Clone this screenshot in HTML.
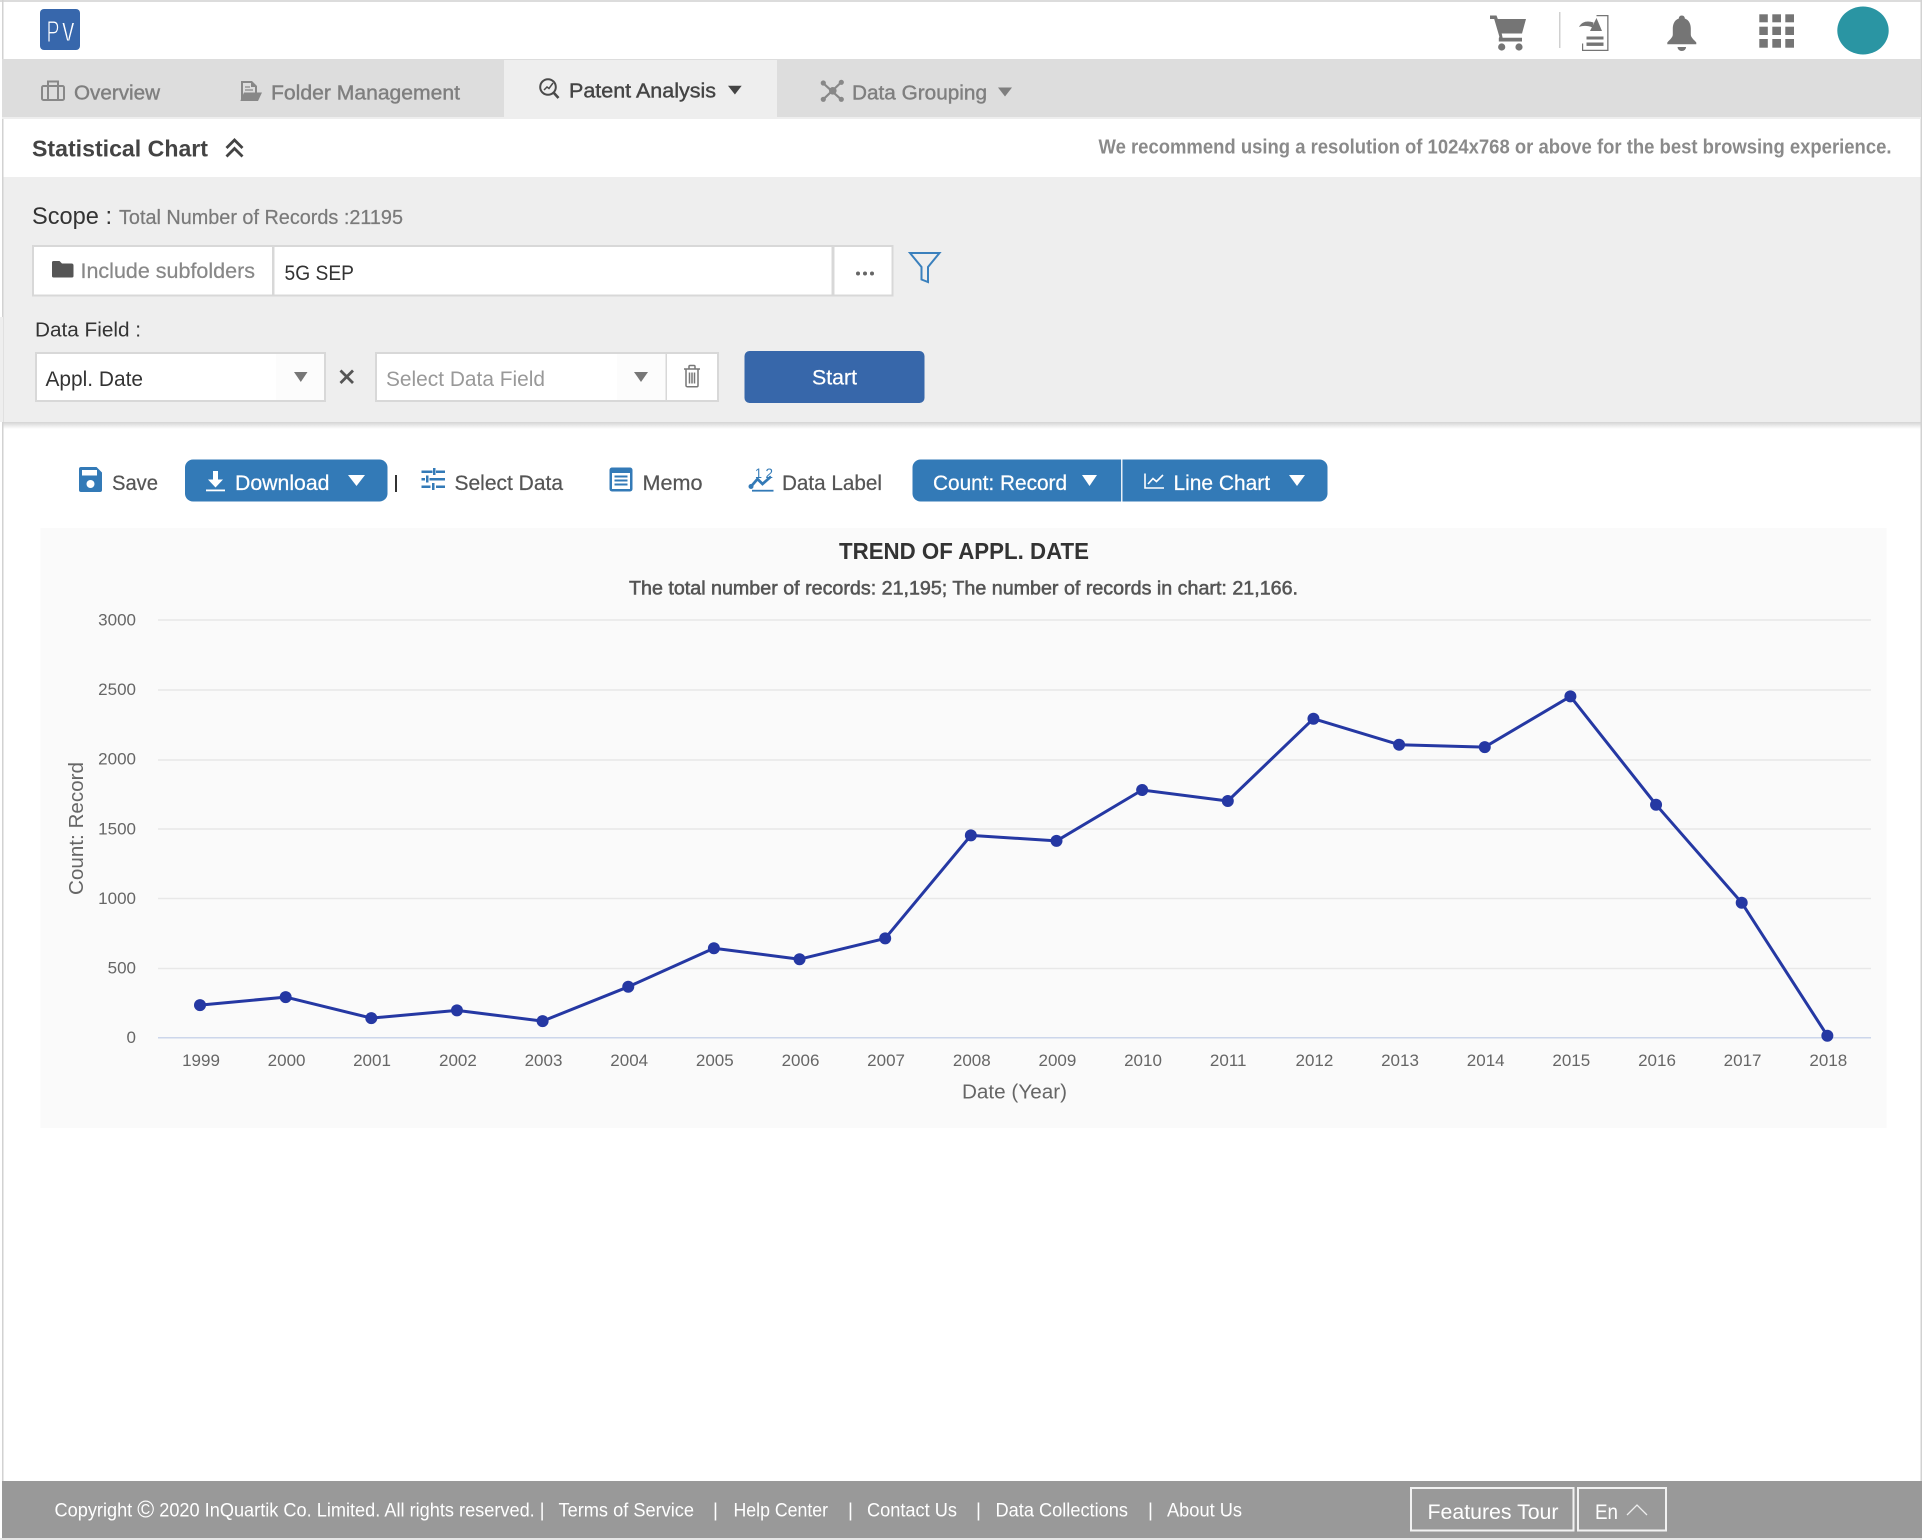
<!DOCTYPE html>
<html lang="en">
<head>
<meta charset="utf-8">
<title>Statistical Chart</title>
<style>
html,body{margin:0;padding:0;background:#fff;width:1922px;height:1540px;overflow:hidden}
svg{display:block}
text{font-family:"Liberation Sans",Arial,sans-serif;white-space:pre}
.m{stroke-width:.4px}
.l{stroke-width:.22px}
</style>
</head>
<body>
<svg xmlns="http://www.w3.org/2000/svg" width="1922" height="1540" viewBox="0 0 1922 1540">
<defs>
<linearGradient id="sh" x1="0" y1="0" x2="0" y2="1"><stop offset="0" stop-color="#d4d4d4"/><stop offset="1" stop-color="#ffffff"/></linearGradient>
</defs>
<rect width="1922" height="1540" fill="#fff"/>
<!-- top -->
<rect x="0" y="0" width="1922" height="2" fill="#dcdcdc"/>
<rect x="2" y="0" width="1.5" height="1481" fill="#d2d2d2"/>
<rect x="1920.5" y="0" width="1.5" height="1481" fill="#d2d2d2"/>

<!-- logo -->
<rect x="40" y="9" width="40" height="41" rx="4" fill="#3767ac"/>
<text x="46.500" y="42" font-size="31" fill="#fff" stroke="#3767ac" stroke-width=".9" textLength="13" lengthAdjust="spacingAndGlyphs">P</text>
<text x="62" y="41" font-size="35" fill="#fff" stroke="#3767ac" stroke-width=".9" textLength="12.500" lengthAdjust="spacingAndGlyphs">v</text>

<!-- header icons -->
<g fill="#757575">
<path d="M1490 15.500h6.500l1.300 3.500H1526l-4 14.500h-20.300l.9 4.200H1522v3.800h-23.200v-3.200l.6-1.600L1494.200 19H1490z"/>
<circle cx="1501.700" cy="47" r="3.600"/><circle cx="1519" cy="47" r="3.600"/>
<rect x="1559" y="12" width="1.500" height="36" fill="#d0d0d0"/>
<path d="M1596.500 18l5.500 13h-12z"/>
<path d="M1579 27C1582 21 1588 20.500 1593.500 22.500L1592.500 27.500C1588 25.500 1583 25.500 1579 27z"/>
<rect x="1586.500" y="36.500" width="17" height="3"/><rect x="1586.500" y="42.500" width="17" height="3.400"/>
<path d="M1596.500 15h12v36h-26.500v-7.500h1.200v6.300h24V16.200h-10.700z"/>
<path d="M1681.800 15.500c2 0 3 1.500 3 3 4.500 1.500 6 6 6 10v6c0 3 3 5 5.500 8v1.800h-29v-1.800c2.500-3 5.500-5 5.500-8v-6c0-4 1.500-8.500 6-10 0-1.500 1-3 3-3z"/>
<path d="M1677.500 47h8.600a4.300 4 0 0 1-8.600 0z"/>
<rect x="1759.300" y="14.300" width="8.500" height="8"/><rect x="1772.300" y="14.300" width="8.700" height="8"/><rect x="1785.300" y="14.300" width="8.700" height="8"/>
<rect x="1759.300" y="26.700" width="8.500" height="8.300"/><rect x="1772.300" y="26.700" width="8.700" height="8.300"/><rect x="1785.300" y="26.700" width="8.700" height="8.300"/>
<rect x="1759.300" y="39" width="8.500" height="8.700"/><rect x="1772.300" y="39" width="8.700" height="8.700"/><rect x="1785.300" y="39" width="8.700" height="8.700"/>
</g>
<ellipse cx="1863" cy="30.500" rx="25.700" ry="24" fill="#2a95a3"/>

<!-- tab bar -->
<rect x="2" y="59" width="1919" height="58" fill="#dddddd"/>
<rect x="2" y="117" width="1919" height="2" fill="#eeeeee"/>
<rect x="504" y="60" width="273" height="58" fill="#eeeeee"/>

<g fill="none" stroke="#888" stroke-width="2">
<rect x="42" y="86" width="22" height="14" rx="1.500"/>
<path d="M48 100V81.500h10V100M48 86h10"/>
</g>
<text x="74" y="99.500" font-size="20" fill="#7f7f7f" stroke="#7f7f7f" class="m" textLength="86" lengthAdjust="spacingAndGlyphs">Overview</text>

<g>
<path d="M241 81h11l5 5v8h-2v-7h-4v-4h-8v15h-1l-1 2z" fill="#888"/>
<path d="M245 87h5M245 90h8" stroke="#888" stroke-width="1.300"/>
<path d="M240.500 100.500l3.500-8h18l-4 8.500h-17.500z" fill="#888"/>
</g>
<text x="271" y="99.500" font-size="20" fill="#7f7f7f" stroke="#7f7f7f" class="m" textLength="189" lengthAdjust="spacingAndGlyphs">Folder Management</text>

<g fill="none" stroke="#4a4a4a" stroke-width="2">
<circle cx="548" cy="87" r="7.800"/>
<path d="M553.500 92.500l5 5.500" stroke-width="2.600"/>
<path d="M544 90l3-3 2 1.500 4-5.500" stroke-width="1.500"/>
</g>
<text x="569" y="97.500" font-size="20" fill="#444" stroke="#444" class="m" textLength="147" lengthAdjust="spacingAndGlyphs">Patent Analysis</text>
<path d="M728 85.700h13.700l-6.800 8.800z" fill="#444"/>

<g stroke="#888" stroke-width="2.200" fill="#888">
<path d="M823.300 83.300L841 99.300M841 82.500L823.300 99.300"/>
<circle cx="832.800" cy="90.800" r="3.800" stroke="none"/>
<circle cx="823.300" cy="83" r="2.600" stroke="none"/><circle cx="841.300" cy="82.300" r="2.600" stroke="none"/>
<circle cx="823.300" cy="99.300" r="2.600" stroke="none"/><circle cx="841.300" cy="99.300" r="2.600" stroke="none"/>
</g>
<text x="852" y="99.500" font-size="20" fill="#7f7f7f" stroke="#7f7f7f" class="m" textLength="135" lengthAdjust="spacingAndGlyphs">Data Grouping</text>
<path d="M998 87.500h14l-7 9z" fill="#7f7f7f"/>

<!-- title row -->
<text x="32" y="156.500" font-size="23.500" font-weight="bold" fill="#444" textLength="176" lengthAdjust="spacingAndGlyphs">Statistical Chart</text>
<path d="M226.500 148l8-8 8 8M226.500 156.500l8-8 8 8" fill="none" stroke="#444" stroke-width="2.800"/>
<text x="1098.500" y="153.500" font-size="20.500" font-weight="bold" fill="#8a8a8a" textLength="793" lengthAdjust="spacingAndGlyphs">We recommend using a resolution of 1024x768 or above for the best browsing experience.</text>

<!-- scope panel -->
<rect x="3.500" y="177" width="1917" height="245" fill="#eeeeee"/>
<rect x="3.500" y="422" width="1917" height="7" fill="url(#sh)"/>
<rect x="0" y="317" width="3" height="105" fill="#eeeeee"/>

<text x="32" y="224" font-size="24" fill="#333" textLength="80" lengthAdjust="spacingAndGlyphs">Scope :</text>
<text x="119" y="224" font-size="20" fill="#7a7a7a" class="l" stroke="#7a7a7a" textLength="284" lengthAdjust="spacingAndGlyphs">Total Number of Records :21195</text>

<rect x="33" y="246" width="240" height="49.500" fill="#fff" stroke="#d8d8d8" stroke-width="2"/>
<rect x="273.500" y="246" width="559" height="49.500" fill="#fff" stroke="#d8d8d8" stroke-width="2"/>
<rect x="833.500" y="246" width="59" height="49.500" fill="#fff" stroke="#d8d8d8" stroke-width="2"/>
<path d="M52 262.500a1.500 1.500 0 0 1 1.500-1.500h6l2.500 2.500h9.500a2 2 0 0 1 2 2V276a1.500 1.500 0 0 1-1.500 1.500h-18.500a1.500 1.500 0 0 1-1.500-1.500z" fill="#555"/>
<text x="80.500" y="278" font-size="21" fill="#888" class="l" stroke="#888" textLength="174.500" lengthAdjust="spacingAndGlyphs">Include subfolders</text>
<text x="284.500" y="280" font-size="21" fill="#333" textLength="69.500" lengthAdjust="spacingAndGlyphs">5G SEP</text>
<g fill="#666"><circle cx="858" cy="273.500" r="2"/><circle cx="865" cy="273.500" r="2"/><circle cx="872" cy="273.500" r="2"/></g>
<path d="M910 253h29.500l-11.500 14v15l-6.500-2.500v-12.500z" fill="none" stroke="#3a80bd" stroke-width="2"/>

<text x="35" y="336.500" font-size="20" fill="#333" textLength="106" lengthAdjust="spacingAndGlyphs">Data Field :</text>

<rect x="36" y="353" width="289" height="48" fill="#fff" stroke="#d8d8d8" stroke-width="2"/>
<rect x="276" y="354" width="48" height="46" fill="#fcfcfc"/>
<text x="45.500" y="386" font-size="21" fill="#333" textLength="97.500" lengthAdjust="spacingAndGlyphs">Appl. Date</text>
<path d="M294 372h13.500l-6.700 10z" fill="#777"/>
<path d="M340.500 370.500l12.500 12.500M353 370.500l-12.500 12.500" stroke="#555" stroke-width="2.800" fill="none"/>

<rect x="376" y="353" width="342" height="48" fill="#fff" stroke="#d8d8d8" stroke-width="2"/>
<rect x="617" y="354" width="49" height="46" fill="#fcfcfc"/>
<rect x="665.500" y="353" width="1.500" height="48" fill="#d8d8d8"/>
<text x="386" y="386" font-size="21" fill="#999" textLength="159" lengthAdjust="spacingAndGlyphs">Select Data Field</text>
<path d="M634 372h14l-7 10z" fill="#777"/>
<g fill="none" stroke="#777" stroke-width="1.500">
<path d="M684 369h16M689 369v-2.500a1 1 0 0 1 1-1h4a1 1 0 0 1 1 1v2.500"/>
<path d="M686 369.500v16a1.200 1.200 0 0 0 1.200 1.200h9.600a1.200 1.200 0 0 0 1.200-1.200v-16M689.500 372.500v11M692 372.500v11M694.500 372.500v11"/>
</g>
<rect x="744.500" y="351" width="180" height="52" rx="5" fill="#3767aa"/>
<text x="812" y="384.500" font-size="21" fill="#fff" class="l" stroke="#fff" textLength="45" lengthAdjust="spacingAndGlyphs">Start</text>

<!-- toolbar -->
<path d="M81 467h15.500l5.500 5.500V490a2 2 0 0 1-2 2H81a2 2 0 0 1-2-2v-21a2 2 0 0 1 2-2z" fill="#337ab7"/>
<rect x="82" y="470" width="15" height="5.500" fill="#fff"/>
<circle cx="90.500" cy="484" r="4" fill="#fff"/>
<text x="112" y="490" font-size="21" fill="#555" class="l" stroke="#555" textLength="46" lengthAdjust="spacingAndGlyphs">Save</text>

<rect x="185" y="459.500" width="202.500" height="42" rx="8" fill="#337ab7"/>
<path d="M213 471h5v8.500h5l-7.500 8-7.500-8h5z" fill="#fff"/>
<rect x="206" y="489.500" width="19" height="1.800" fill="#fff"/>
<text x="235" y="490" font-size="21" fill="#fff" class="l" stroke="#fff" textLength="94.500" lengthAdjust="spacingAndGlyphs">Download</text>
<path d="M348 475h17l-8.500 11z" fill="#fff"/>
<rect x="395" y="475" width="2" height="17" fill="#333"/>

<g fill="#337ab7">
<rect x="421.500" y="470.500" width="11" height="2.500"/><rect x="436" y="470.500" width="9" height="2.500"/><rect x="433" y="468" width="2.500" height="7"/>
<rect x="421.500" y="478" width="3.500" height="2.500"/><rect x="429.500" y="478" width="15.500" height="2.500"/><rect x="426" y="475.500" width="2.500" height="7"/>
<rect x="421.500" y="485.500" width="9" height="2.500"/><rect x="436" y="485.500" width="9" height="2.500"/><rect x="432" y="483" width="2.500" height="7"/>
</g>
<text x="454.500" y="490" font-size="21" fill="#555" class="l" stroke="#555" textLength="108.500" lengthAdjust="spacingAndGlyphs">Select Data</text>

<rect x="609.500" y="467.500" width="23" height="24" rx="2.500" fill="#337ab7"/>
<rect x="612" y="473" width="18" height="16" fill="#fff"/>
<rect x="614.500" y="475.500" width="13" height="2" fill="#337ab7"/><rect x="614.500" y="479.500" width="13" height="2" fill="#337ab7"/><rect x="614.500" y="483.500" width="13" height="2" fill="#337ab7"/>
<text x="642.500" y="490" font-size="21" fill="#555" class="l" stroke="#555" textLength="60" lengthAdjust="spacingAndGlyphs">Memo</text>

<text x="755" y="478" font-size="14" fill="#337ab7" textLength="7" lengthAdjust="spacingAndGlyphs">1</text>
<text x="765.500" y="478" font-size="14" fill="#337ab7" textLength="7.500" lengthAdjust="spacingAndGlyphs">2</text>
<path d="M751 486.500l6.500-7.500 5 5 8.500-7.500" fill="none" stroke="#337ab7" stroke-width="2.800"/>
<circle cx="751" cy="486.500" r="2.500" fill="#337ab7"/>
<rect x="752" y="489.800" width="21.500" height="1.800" fill="#337ab7"/>
<text x="782" y="490" font-size="21" fill="#555" class="l" stroke="#555" textLength="100" lengthAdjust="spacingAndGlyphs">Data Label</text>

<rect x="912.500" y="459.500" width="415" height="42" rx="8" fill="#337ab7"/>
<rect x="1121" y="459.500" width="1.500" height="42" fill="#e8f0f7"/>
<text x="933" y="490" font-size="21" fill="#fff" class="l" stroke="#fff" textLength="134" lengthAdjust="spacingAndGlyphs">Count: Record</text>
<path d="M1082 475h15l-7.500 11z" fill="#fff"/>
<path d="M1145 473.500v14.500h19M1148 484l5-5.500 3.500 3 6.500-6.500" fill="none" stroke="#fff" stroke-width="1.600"/>
<text x="1173.500" y="490" font-size="21" fill="#fff" class="l" stroke="#fff" textLength="96.500" lengthAdjust="spacingAndGlyphs">Line Chart</text>
<path d="M1289 475h16l-8 11z" fill="#fff"/>

<!-- chart panel -->
<rect x="40.500" y="528" width="1846" height="600" fill="#fafafa"/>
<text x="839" y="559" font-size="23.500" font-weight="bold" fill="#333" textLength="250" lengthAdjust="spacingAndGlyphs">TREND OF APPL. DATE</text>
<text x="629" y="594.500" font-size="19.500" fill="#555" stroke="#555" stroke-width=".55" textLength="669" lengthAdjust="spacingAndGlyphs">The total number of records: 21,195; The number of records in chart: 21,166.</text>

<g stroke="#e8e8e8" stroke-width="1.500">
<line x1="158" y1="620" x2="1871" y2="620"/>
<line x1="158" y1="690" x2="1871" y2="690"/>
<line x1="158" y1="760" x2="1871" y2="760"/>
<line x1="158" y1="829" x2="1871" y2="829"/>
<line x1="158" y1="898.500" x2="1871" y2="898.500"/>
<line x1="158" y1="968.500" x2="1871" y2="968.500"/>
</g>
<line x1="158" y1="1037.700" x2="1871" y2="1037.700" stroke="#ccd6eb" stroke-width="1.500"/>

<g font-size="17" fill="#666" text-anchor="end">
<text x="136" y="625.500">3000</text>
<text x="136" y="695">2500</text>
<text x="136" y="764.500">2000</text>
<text x="136" y="834.500">1500</text>
<text x="136" y="904">1000</text>
<text x="136" y="973.500">500</text>
<text x="136" y="1043">0</text>
</g>
<g font-size="17" fill="#666" text-anchor="middle">
<text x="201" y="1066">1999</text>
<text x="286.600" y="1066">2000</text>
<text x="372" y="1066">2001</text>
<text x="457.900" y="1066">2002</text>
<text x="543.500" y="1066">2003</text>
<text x="629.200" y="1066">2004</text>
<text x="714.800" y="1066">2005</text>
<text x="800.500" y="1066">2006</text>
<text x="886.100" y="1066">2007</text>
<text x="971.800" y="1066">2008</text>
<text x="1057.400" y="1066">2009</text>
<text x="1143" y="1066">2010</text>
<text x="1228.200" y="1066">2011</text>
<text x="1314.400" y="1066">2012</text>
<text x="1400" y="1066">2013</text>
<text x="1485.700" y="1066">2014</text>
<text x="1571.300" y="1066">2015</text>
<text x="1657" y="1066">2016</text>
<text x="1742.600" y="1066">2017</text>
<text x="1828.300" y="1066">2018</text>
</g>
<text x="962" y="1098.500" font-size="20" fill="#666" textLength="105" lengthAdjust="spacingAndGlyphs">Date (Year)</text>
<text transform="translate(83,895) rotate(-90)" font-size="20" fill="#666" textLength="133" lengthAdjust="spacingAndGlyphs">Count: Record</text>

<g transform="translate(0,.4)">
<polyline fill="none" stroke="#2538a3" stroke-width="3" stroke-linejoin="round" points="200,1004.700 285.650,996.700 371.300,1017.700 456.950,1010 542.600,1020.700 628.250,986.400 713.900,947.800 799.550,958.800 885.200,938 970.850,835 1056.500,840.500 1142.150,789.600 1227.800,800.600 1313.450,718.300 1399.100,744.300 1484.750,746.700 1570.400,696 1656.050,804.300 1741.700,902.300 1827.350,1035.300"/>
<g fill="#2538a3">
<circle cx="200" cy="1004.700" r="6"/><circle cx="285.650" cy="996.700" r="6"/><circle cx="371.300" cy="1017.700" r="6"/><circle cx="456.950" cy="1010" r="6"/><circle cx="542.600" cy="1020.700" r="6"/>
<circle cx="628.250" cy="986.400" r="6"/><circle cx="713.900" cy="947.800" r="6"/><circle cx="799.550" cy="958.800" r="6"/><circle cx="885.200" cy="938" r="6"/><circle cx="970.850" cy="835" r="6"/>
<circle cx="1056.500" cy="840.500" r="6"/><circle cx="1142.150" cy="789.600" r="6"/><circle cx="1227.800" cy="800.600" r="6"/><circle cx="1313.450" cy="718.300" r="6"/><circle cx="1399.100" cy="744.300" r="6"/>
<circle cx="1484.750" cy="746.700" r="6"/><circle cx="1570.400" cy="696" r="6"/><circle cx="1656.050" cy="804.300" r="6"/><circle cx="1741.700" cy="902.300" r="6"/><circle cx="1827.350" cy="1035.300" r="6"/>
</g>
</g>

<!-- footer -->
<rect x="2" y="1481" width="1920" height="57" fill="#999999"/>
<rect x="0" y="1538" width="1922" height="2" fill="#e6e6e6"/>
<g font-size="19" fill="#fff">
<text x="54.500" y="1516.500" textLength="490" lengthAdjust="spacingAndGlyphs">Copyright <tspan font-size="24" dy="1">©</tspan><tspan dy="-1"> 2020 InQuartik Co. Limited. All rights reserved. |</tspan></text>
<text x="558.500" y="1516.500" textLength="135.500" lengthAdjust="spacingAndGlyphs">Terms of Service</text>
<text x="713" y="1516.500">|</text>
<text x="733.500" y="1516.500" textLength="94.500" lengthAdjust="spacingAndGlyphs">Help Center</text>
<text x="848" y="1516.500">|</text>
<text x="867" y="1516.500" textLength="90" lengthAdjust="spacingAndGlyphs">Contact Us</text>
<text x="976" y="1516.500">|</text>
<text x="995.500" y="1516.500" textLength="132.500" lengthAdjust="spacingAndGlyphs">Data Collections</text>
<text x="1148" y="1516.500">|</text>
<text x="1167" y="1516.500" textLength="75" lengthAdjust="spacingAndGlyphs">About Us</text>
</g>
<rect x="1411" y="1488" width="162.500" height="42.500" fill="none" stroke="#f2f2f2" stroke-width="2"/>
<text x="1427.500" y="1519" font-size="21" fill="#fff" textLength="131" lengthAdjust="spacingAndGlyphs">Features Tour</text>
<rect x="1578" y="1488" width="88" height="42.500" fill="none" stroke="#f2f2f2" stroke-width="2"/>
<text x="1595" y="1519" font-size="21.500" fill="#fff" textLength="23" lengthAdjust="spacingAndGlyphs">En</text>
<path d="M1627 1515l10-10 10 10" fill="none" stroke="#eee" stroke-width="1.300"/>
</svg>
</body>
</html>
